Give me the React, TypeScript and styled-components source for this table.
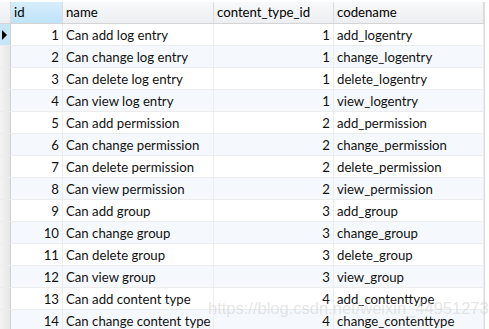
import React from "react";
import styled, { createGlobalStyle } from "styled-components";

const Global = createGlobalStyle`
  html, body { margin: 0; padding: 0; background: #ffffff; }
  body { font-family: Lato, "Open Sans", sans-serif; }
`;

const rows: [number, string, number, string][] = [
  [1, "Can add log entry", 1, "add_logentry"],
  [2, "Can change log entry", 1, "change_logentry"],
  [3, "Can delete log entry", 1, "delete_logentry"],
  [4, "Can view log entry", 1, "view_logentry"],
  [5, "Can add permission", 2, "add_permission"],
  [6, "Can change permission", 2, "change_permission"],
  [7, "Can delete permission", 2, "delete_permission"],
  [8, "Can view permission", 2, "view_permission"],
  [9, "Can add group", 3, "add_group"],
  [10, "Can change group", 3, "change_group"],
  [11, "Can delete group", 3, "delete_group"],
  [12, "Can view group", 3, "view_group"],
  [13, "Can add content type", 4, "add_contenttype"],
  [14, "Can change content type", 4, "change_contenttype"],
];

const COLS = "11px 52px 151px 120px 150px";

const Page = styled.div`
  position: relative;
  width: 489px;
  height: 329px;
  overflow: hidden;
  background: #fff;
`;

const Grid = styled.div`
  width: 484px;
  border-right: 1px solid #dcdcdc;
  height: 329px;
`;

const HeaderRow = styled.div`
  display: grid;
  grid-template-columns: ${COLS};
  height: 21px;
  margin-top: 2px;
  border-bottom: 1px solid #d4d4d4;
  background: linear-gradient(#f8f9fa, #eceef1);
`;

const HeaderCell = styled.div<{ $active?: boolean }>`
  border-right: 1px solid #dcdcdc;
  padding-left: 3px;
  font-size: 13.2px;
  line-height: 21px;
  color: #000;
  background: ${(p) => (p.$active ? "linear-gradient(#d6eefb, #bfe3f7)" : "transparent")};
`;

const Row = styled.div<{ $alt?: boolean }>`
  display: grid;
  grid-template-columns: ${COLS};
  height: 21px;
  border-bottom: 1px solid #ececec;
  background: ${(p) => (p.$alt ? "#f5f9fd" : "#ffffff")};
`;

const Indicator = styled.div<{ $current?: boolean }>`
  border-right: 1px solid #d0d0d0;
  background: ${(p) => (p.$current ? "#c6e6f8" : "linear-gradient(90deg, #f4f4f4, #e6e6e6)")};
  display: flex;
  align-items: center;
  padding-left: 2px;
`;

const Cell = styled.div<{ $right?: boolean }>`
  border-right: 1px solid #ececec;
  font-size: 13.2px;
  line-height: 23px;
  color: #111;
  white-space: nowrap;
  overflow: hidden;
  text-align: ${(p) => (p.$right ? "right" : "left")};
  padding: ${(p) => (p.$right ? "0 3px 0 0" : "0 0 0 3px")};
`;

const Arrow = styled.div`
  width: 0;
  height: 0;
  border-top: 5px solid transparent;
  border-bottom: 5px solid transparent;
  border-left: 5px solid #000;
`;

const Watermark = styled.div`
  position: absolute;
  left: 208px;
  top: 299px;
  font-family: "Liberation Sans", Arial, sans-serif;
  font-size: 16.5px;
  color: rgba(200, 200, 200, 0.45);
  white-space: nowrap;
  pointer-events: none;
`;

export default function App() {
  return (
    <Page>
      <Global />
      <Grid>
        <HeaderRow>
          <HeaderCell />
          <HeaderCell $active>id</HeaderCell>
          <HeaderCell>name</HeaderCell>
          <HeaderCell>content_type_id</HeaderCell>
          <HeaderCell>codename</HeaderCell>
        </HeaderRow>
        {rows.map(([id, name, ct, code], i) => (
          <Row key={id} $alt={i % 2 === 1}>
            <Indicator $current={i === 0}>{i === 0 && <Arrow />}</Indicator>
            <Cell $right>{id}</Cell>
            <Cell>{name}</Cell>
            <Cell $right>{ct}</Cell>
            <Cell>{code}</Cell>
          </Row>
        ))}
      </Grid>
      <Watermark>https://blog.csdn.net/weixin_44951273</Watermark>
    </Page>
  );
}
